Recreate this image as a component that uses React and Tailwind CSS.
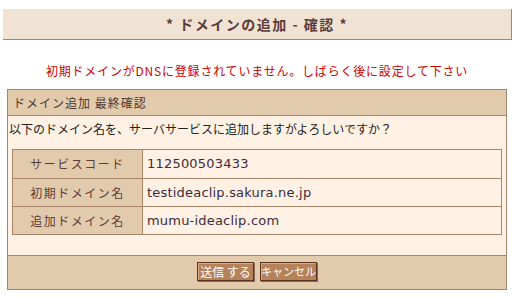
const jp = { fontFamily: '"Noto Sans CJK JP", "DejaVu Sans", sans-serif' };
const val = { fontFamily: '"DejaVu Sans", "Noto Sans CJK JP", sans-serif' };

const rows = [
  ['サービスコード', '112500503433'],
  ['初期ドメイン名', 'testideaclip.sakura.ne.jp'],
  ['追加ドメイン名', 'mumu-ideaclip.com'],
];

export default function App() {
  return (
    <div className="w-[514px] h-[297px] bg-white pt-[9px] overflow-hidden" style={jp}>
      <div className="ml-[3px] w-[509px] h-[31px] bg-[#f1e3d3] border-b border-r border-[#a8846a] flex items-center justify-center">
        <h1 className="text-[14px] font-bold text-[#5c3c3a] tracking-[1.5px]">* ドメインの追加 - 確認 *</h1>
      </div>

      <p className="mt-[21px] h-[19px] text-center text-[12px] leading-[19px] text-[#d00000] tracking-[0.8px] whitespace-nowrap">
        初期ドメインがDNSに登録されていません。しばらく後に設定して下さい
      </p>

      <div className="mt-[9px] ml-[7px] w-[500px] border border-[#a8846a] bg-[#fff2e4]">
        <div className="h-[26px] bg-[#e2cbac] border-b border-[#a8846a] flex items-center px-[5px]">
          <h2 className="text-[12px] text-[#4e3634] tracking-[1px]">ドメイン追加 最終確認</h2>
        </div>
        <p className="px-[1px] h-[24px] leading-[26px] text-[12px] text-[#222] whitespace-nowrap">
          以下のドメイン名を、サーバサービスに追加しますがよろしいですか？
        </p>
        <div className="mx-[4px] mt-[9px] mb-[20px] border border-[#a8846a]">
          {rows.map(([label, value], i) => (
            <div key={label} className={`flex h-[28px] ${i > 0 ? 'border-t border-[#a8846a]' : ''}`}>
              <div className="w-[130px] bg-[#e2cbac] border-r border-[#a8846a] flex items-center justify-center text-[12px] text-[#5c3c3a] tracking-[1.5px]">
                {label}
              </div>
              <div className="flex-1 flex items-center pl-[4px] text-[13px] text-[#3e2a3e] tracking-[0.2px]" style={val}>
                {value}
              </div>
            </div>
          ))}
        </div>
        <div className="h-[34px] bg-[#e2cbac] border-t border-[#a8846a] flex items-center justify-center gap-[6px] pb-[2px]">
          <button className="w-[57px] h-[19px] p-0 whitespace-nowrap bg-[#b68259] border border-[#5b3422] shadow-[inset_1px_1px_0_#d9a982,1px_1px_0_#8a6a55] text-white text-[12px] leading-none">
            送信 する
          </button>
          <button className="w-[57px] h-[19px] p-0 whitespace-nowrap bg-[#b68259] border border-[#5b3422] shadow-[inset_1px_1px_0_#d9a982,1px_1px_0_#8a6a55] text-white text-[11px] leading-none">
            キャンセル
          </button>
        </div>
      </div>
    </div>
  );
}
